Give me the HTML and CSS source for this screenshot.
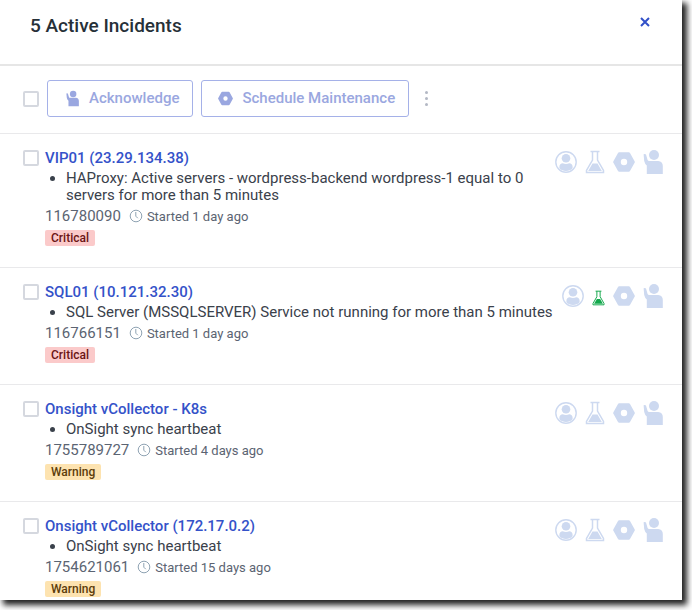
FILE: index.html
```
<!DOCTYPE html>
<html lang="en">
<head>
	<meta charset="UTF-8">
	<title>Active Incidents</title>
	<link rel="stylesheet" href="styles.css">
</head>
<body>
	<svg class="sprite" aria-hidden="true">
		<symbol id="user" viewBox="1 1 22 22">
			<circle cx="12" cy="12" r="10.2" fill="none" stroke="currentColor" stroke-width="1.4"/>
			<circle cx="12" cy="8.2" r="4.3"/>
			<path d="M5.4 18.2v-1.4c0-2.2 1.4-3.6 3.4-3.6 1 .5 2 .8 3.2.8s2.200-.3 3.200-.8c2 0 3.400 1.400 3.400 3.600v1.400c-1.600 1.800-4 2.800-6.600 2.800s-5-1-6.600-2.800z"/>
		</symbol>
		<symbol id="flask" viewBox="0 0 20 24">
			<path d="M5.500 1.500h9M7.500 1.500v8.500L1.500 20.500v2h17v-2L12.500 10V1.500" fill="none" stroke="currentColor" stroke-width="1.500"/>
			<path d="M7.500 13.500h5l4.300 7.500H3.200z"/>
		</symbol>
		<symbol id="nut" viewBox="1 1 22 22">
			<path fill-rule="evenodd" d="M7.200 2.200h9.600q.8 0 1.200.7l4.600 8.300q.5.800 0 1.600L18 21.100q-.4.700-1.200.7H7.200q-.8 0-1.200-.7l-4.600-8.300q-.5-.8 0-1.600L6 2.900q.4-.7 1.200-.7zM12 8.800a3.200 3.200 0 1 0 0 6.400 3.200 3.200 0 1 0 0-6.400z"/>
		</symbol>
		<symbol id="hand" viewBox="0 0 20 24">
			<circle cx="11" cy="5" r="5"/>
			<path d="M.6 4.300q1.500-.8 2.400.2L4.600 10q.4 1 1.600 1h9q4.600.4 4.600 5v8H3.800v-8.500Q1.800 13.800 1.200 11z"/>
		</symbol>
		<symbol id="clock" viewBox="0 0 14 14">
			<circle cx="7" cy="7" r="5.800" fill="none" stroke="currentColor" stroke-width="1"/>
			<path d="M6.800 3v4.200l2 2" fill="none" stroke="currentColor" stroke-width="1"/>
		</symbol>
	</svg>

	<main class="panel">
		<header class="header">
			<h1>5 Active Incidents</h1>
			<button class="close" aria-label="Close"><svg viewBox="0 0 10 10"><path d="M1 1l8 8M9 1L1 9"/></svg></button>
		</header>

		<div class="toolbar">
			<input type="checkbox" class="check" aria-label="Select all incidents">
			<button class="btn"><svg class="btn-hand"><use href="#hand"/></svg>Acknowledge</button>
			<button class="btn"><svg class="btn-nut"><use href="#nut"/></svg>Schedule Maintenance</button>
			<button class="more" aria-label="More actions"><i></i><i></i><i></i></button>
		</div>

		<section class="incident">
			<input type="checkbox" class="check" aria-label="Select VIP01">
			<div class="info">
				<a href="#" class="name">VIP01 (23.29.134.38)</a>
				<ul>
					<li>HAProxy: Active servers - wordpress-backend wordpress-1 equal to 0 servers for more than 5 minutes</li>
				</ul>
				<div class="meta"><span class="id">116780090</span><svg class="clock"><use href="#clock"/></svg>Started 1 day ago</div>
				<span class="badge critical">Critical</span>
			</div>
			<div class="actions">
				<button aria-label="Assign"><svg class="user"><use href="#user"/></svg></button>
				<button aria-label="Test"><svg class="flask"><use href="#flask"/></svg></button>
				<button aria-label="Maintenance"><svg class="nut"><use href="#nut"/></svg></button>
				<button aria-label="Acknowledge"><svg class="hand"><use href="#hand"/></svg></button>
			</div>
		</section>

		<section class="incident">
			<input type="checkbox" class="check" aria-label="Select SQL01">
			<div class="info">
				<a href="#" class="name">SQL01 (10.121.32.30)</a>
				<ul>
					<li>SQL Server (MSSQLSERVER) Service not running for more than 5 minutes</li>
				</ul>
				<div class="meta"><span class="id">116766151</span><svg class="clock"><use href="#clock"/></svg>Started 1 day ago</div>
				<span class="badge critical">Critical</span>
			</div>
			<div class="actions">
				<button aria-label="Assign"><svg class="user"><use href="#user"/></svg></button>
				<button aria-label="Test"><svg class="flask running"><use href="#flask"/></svg></button>
				<button aria-label="Maintenance"><svg class="nut"><use href="#nut"/></svg></button>
				<button aria-label="Acknowledge"><svg class="hand"><use href="#hand"/></svg></button>
			</div>
		</section>

		<section class="incident">
			<input type="checkbox" class="check" aria-label="Select Onsight vCollector - K8s">
			<div class="info">
				<a href="#" class="name">Onsight vCollector - K8s</a>
				<ul>
					<li>OnSight sync heartbeat</li>
				</ul>
				<div class="meta"><span class="id">1755789727</span><svg class="clock"><use href="#clock"/></svg>Started 4 days ago</div>
				<span class="badge warning">Warning</span>
			</div>
			<div class="actions">
				<button aria-label="Assign"><svg class="user"><use href="#user"/></svg></button>
				<button aria-label="Test"><svg class="flask"><use href="#flask"/></svg></button>
				<button aria-label="Maintenance"><svg class="nut"><use href="#nut"/></svg></button>
				<button aria-label="Acknowledge"><svg class="hand"><use href="#hand"/></svg></button>
			</div>
		</section>

		<section class="incident">
			<input type="checkbox" class="check" aria-label="Select Onsight vCollector (172.17.0.2)">
			<div class="info">
				<a href="#" class="name">Onsight vCollector (172.17.0.2)</a>
				<ul>
					<li>OnSight sync heartbeat</li>
				</ul>
				<div class="meta"><span class="id">1754621061</span><svg class="clock"><use href="#clock"/></svg>Started 15 days ago</div>
				<span class="badge warning">Warning</span>
			</div>
			<div class="actions">
				<button aria-label="Assign"><svg class="user"><use href="#user"/></svg></button>
				<button aria-label="Test"><svg class="flask"><use href="#flask"/></svg></button>
				<button aria-label="Maintenance"><svg class="nut"><use href="#nut"/></svg></button>
				<button aria-label="Acknowledge"><svg class="hand"><use href="#hand"/></svg></button>
			</div>
		</section>
	</main>
</body>
</html>
```
FILE: styles.css
```
*{margin:0;padding:0;box-sizing:border-box;}
body{
	height: 100vh;
	padding: 0 10px 10px 0;
	overflow: hidden;
	background: #fff;
	color: #3a414b;
	font: 15px/17px Roboto, sans-serif;
}
.sprite{
	position: absolute;
	width: 0;
	height: 0;
}
svg{
	display: block;
	fill: currentColor;
}
button{
	border: 0;
	background: none;
	font: inherit;
	color: inherit;
	cursor: pointer;
}
.panel{
	height: 100%;
	overflow: hidden;
	background: #fff;
	box-shadow: 4px 4px 6px 1px #222;
}
.header{
	display: flex;
	justify-content: space-between;
	align-items: flex-start;
	height: 66px;
	padding: 14px 32px 0 30px;
	border-bottom: 2px solid #e6e6e6;
}
h1{
	font-size: 19px;
	line-height: 24px;
	font-weight: 500;
	color: #263038;
}
.close{
	padding: 3px 0;
	color: #3150c8;
}
.close svg{
	width: 10px;
	height: 10px;
	stroke: currentColor;
	stroke-width: 2;
}
.toolbar{
	display: flex;
	align-items: center;
	gap: 8px;
	height: 68px;
	padding: 0 23px 2px;
	border-bottom: 1px solid #e9e9eb;
}
.check{
	appearance: none;
	flex: none;
	width: 16px;
	height: 16px;
	border: 2px solid #d5d8df;
	border-radius: 2px;
	background: #fff;
}
.btn{
	display: flex;
	align-items: center;
	height: 37px;
	padding: 0 13px 0 16px;
	border: 1px solid #a5b1e8;
	border-radius: 3px;
	color: #9aa7e0;
	font-weight: 500;
}
.btn-hand{
	width: 13px;
	height: 17px;
	margin: 0 10px 0 2px;
}
.btn-nut{
	width: 15px;
	height: 15px;
	margin-right: 9px;
}
.more{
	display: grid;
	gap: 3px;
	padding: 8px;
}
.more i{
	width: 3px;
	height: 3px;
	border-radius: 50%;
	background: #b3b8c4;
}
.incident{
	display: flex;
	padding: 15px 19px 21px 23px;
	border-bottom: 1px solid #e9e9eb;
}
.incident .check{
	margin-top: 1px;
}
.info{
	flex: 1;
	padding-left: 6px;
}
.name{
	display: block;
	line-height: 18px;
	font-weight: 500;
	color: #3452c9;
	text-decoration: none;
}
ul{
	margin: 3px 0 2px;
	padding-left: 21px;
}
.meta{
	display: flex;
	align-items: center;
	height: 20px;
	font-size: 13px;
	color: #5b6472;
}
.id{
	font-size: 15px;
}
.clock{
	width: 14px;
	height: 14px;
	margin: 0 4px 0 8px;
	color: #8fa3b3;
}
.badge{
	display: block;
	width: fit-content;
	height: 16px;
	margin-top: 4px;
	padding: 0 6px;
	border-radius: 2px;
	font-size: 12px;
	line-height: 16px;
	font-weight: 500;
}
.critical{
	background: #fbcaca;
	color: #6b1414;
}
.warning{
	background: #fde3b0;
	color: #5c3c0a;
}
.actions{
	display: flex;
	align-items: center;
	gap: 8px;
	height: 26px;
	color: #cdd9f0;
}
.user{
	width: 22px;
	height: 22px;
}
.flask{
	width: 20px;
	height: 24px;
}
.running{
	width: 13px;
	height: 16px;
	margin-top: 4px;
	color: #12a84b;
}
.nut{
	width: 22px;
	height: 22px;
}
.hand{
	width: 20px;
	height: 24px;
}
```
